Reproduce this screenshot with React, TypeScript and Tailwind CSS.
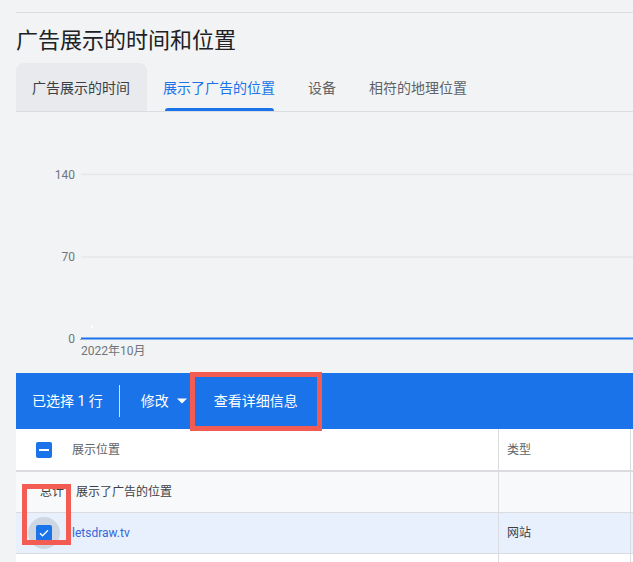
const tabs = ['广告展示的时间', '展示了广告的位置', '设备', '相符的地理位置'];

const gridLines = [
  { label: '140', y: 62.5 },
  { label: '70', y: 145 },
];

function MinusBox() {
  return (
    <span className="flex h-4 w-4 items-center justify-center rounded-[2px] bg-[#1a73e8]">
      <span className="h-[2px] w-[10px] bg-white" />
    </span>
  );
}

function CheckBox() {
  return (
    <span className="flex h-4 w-4 items-center justify-center rounded-[2px] bg-[#1a73e8]">
      <svg width="12" height="12" viewBox="0 0 24 24" fill="none">
        <path d="M4 12.5l5 5L20 6.5" stroke="white" strokeWidth="2.6" />
      </svg>
    </span>
  );
}

export default function App() {
  return (
    <div className="min-h-screen w-full overflow-hidden bg-[#f1f3f4] font-['Roboto','Noto_Sans_CJK_SC',sans-serif]">
      <div className="pl-4">
        {/* top rule */}
        <div className="mt-3 h-px bg-[#dadce0]" />

        <h1 className="mt-[11px] h-7 font-['Noto_Sans_CJK_SC',sans-serif] text-[22px] leading-7 text-[#202124]">
          广告展示的时间和位置
        </h1>

        {/* Tabs */}
        <div className="mt-[11px] flex border-b border-[#dadce0]">
          {tabs.map((t, i) => (
            <div
              key={t}
              className={
                'relative flex h-12 items-center pl-4 pr-[17px] font-["Noto_Sans_CJK_SC",sans-serif] text-[14px] ' +
                (i === 0 ? 'rounded-t-lg bg-[#e8eaed] text-[#3c4043] ' : '') +
                (i === 1 ? 'text-[#1a73e8] ' : '') +
                (i > 1 ? 'text-[#5f6368]' : '')
              }
            >
              {t}
              {i === 1 && (
                <span className="absolute bottom-0 left-[18px] right-[18px] h-[3px] rounded-t-[3px] bg-[#1a73e8]" />
              )}
            </div>
          ))}
        </div>
      </div>

      {/* Chart */}
      <svg width="633" height="261" className="block">
        {gridLines.map((g) => (
          <g key={g.label}>
            <line x1="81" x2="633" y1={g.y} y2={g.y} stroke="#e6e7e9" strokeWidth="1.5" />
            <text x="75" y={g.y + 4} textAnchor="end" fontSize="12" fill="#70757a" fontFamily="Roboto">
              {g.label}
            </text>
          </g>
        ))}
        <text x="75" y="231" textAnchor="end" fontSize="12" fill="#70757a" fontFamily="Roboto">
          0
        </text>
        <rect x="80" y="227" width="1" height="1" fill="#9aa0a6" />
        <line x1="81" x2="633" y1="226.5" y2="226.5" stroke="#1a73e8" strokeWidth="2" />
        <rect x="91" y="214" width="2" height="2" fill="#ffffff" />
        <text x="81" y="243" fontSize="12" fill="#70757a" fontFamily="Roboto, 'Noto Sans CJK SC', sans-serif">
          2022年10月
        </text>
      </svg>

      <div className="pl-4">
        {/* Selection bar */}
        <div className="flex h-14 items-center bg-[#1a73e8] pl-4 text-[14px] text-white">
          <span>已选择 1 行</span>
          <span className="ml-4 h-8 w-px bg-white/80" />
          <div className="flex items-center pl-[21px] pr-[3px]">
            <span>修改</span>
            <svg className="ml-2" width="10" height="6" viewBox="0 0 10 5">
              <path d="M0 0h10L5 5z" fill="white" />
            </svg>
          </div>
          <div className="relative flex h-14 items-center px-6">
            查看详细信息
            <span className="absolute -top-[1px] -bottom-[2px] left-0 right-0 border-[5px] border-[#f25c52]" />
          </div>
        </div>

        {/* Table */}
        <div className="bg-white text-[12px]">
          <div className="flex h-[43px] border-b-2 border-[#dadce0]">
            <div className="flex w-[483px] items-center border-r border-[#dadce0] pl-5">
              <MinusBox />
              <span className="ml-5 text-[#5f6368]">展示位置</span>
            </div>
            <div className="flex w-[132px] items-center border-r border-[#dadce0] pl-2 text-[#5f6368]">类型</div>
          </div>

          <div className="flex h-[41px] border-b border-[#dadce0] bg-[#f8f9fa]">
            <div className="relative flex w-[483px] items-center border-r border-[#dadce0] pl-6 text-[#3c4043]">
              <span>总计</span>
              <span className="ml-3">展示了广告的位置</span>
            </div>
            <div className="w-[132px] border-r border-[#dadce0]" />
          </div>

          <div className="flex h-[41px] border-b border-[#dadce0] bg-[#e8f0fe]">
            <div className="relative flex w-[483px] items-center border-r border-[#dadce0] pl-5">
              <span className="relative flex items-center justify-center">
                <span className="absolute h-8 w-8 rounded-full bg-[#3c4043]/15" />
                <span className="relative">
                  <CheckBox />
                </span>
              </span>
              <span className="ml-5 text-[#3367d6]">letsdraw.tv</span>
              {/* annotation box */}
              <span className="absolute left-[6px] -top-[29px] h-[61px] w-[49px] border-[5px] border-[#f25c52]" />
            </div>
            <div className="flex w-[132px] items-center border-r border-[#dadce0] pl-2 text-[#3c4043]">网站</div>
          </div>

          <div className="flex h-10">
            <div className="w-[483px] border-r border-[#dadce0]" />
            <div className="w-[132px] border-r border-[#dadce0]" />
          </div>
        </div>
      </div>
    </div>
  );
}
